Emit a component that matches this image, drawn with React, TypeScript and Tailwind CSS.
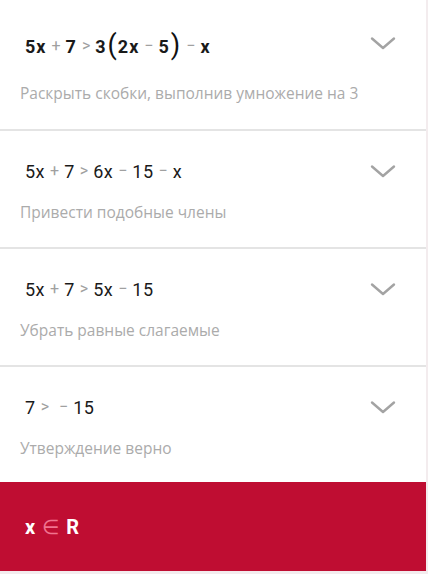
import React from 'react'

type Token = { t: string; op?: boolean; paren?: boolean }

interface Step {
  tokens: Token[]
  hint: string
  bold?: boolean
}

const n = (t: string): Token => ({ t })
const o = (t: string): Token => ({ t, op: true })
const p = (t: string): Token => ({ t, paren: true })

const steps: Step[] = [
  {
    bold: true,
    tokens: [n('5x'), o('+'), n('7'), o('>'), n('3'), p('('), n('2x'), o('−'), n('5'), p(')'), o('−'), n('x')],
    hint: 'Раскрыть скобки, выполнив умножение на 3'
  },
  {
    tokens: [n('5x'), o('+'), n('7'), o('>'), n('6x'), o('−'), n('15'), o('−'), n('x')],
    hint: 'Привести подобные члены'
  },
  {
    tokens: [n('5x'), o('+'), n('7'), o('>'), n('5x'), o('−'), n('15')],
    hint: 'Убрать равные слагаемые'
  },
  {
    tokens: [n('7'), o('>'), o('−'), n('15')],
    hint: 'Утверждение верно'
  }
]

function Chevron() {
  return (
    <svg width="26" height="15" viewBox="0 0 26 15" fill="none" className="shrink-0">
      <path d="M2 2.5 L13 12 L24 2.5" stroke="#a3a3a3" strokeWidth="2.4" strokeLinecap="round" strokeLinejoin="round" />
    </svg>
  )
}

function Expression({ tokens, bold }: { tokens: Token[]; bold?: boolean }) {
  return (
    <div className={`flex items-center ${bold ? 'h-8 font-bold' : 'h-7'} text-[18px] text-[#1a1a1a]`}>
      {tokens.map((tk, i) => {
        if (tk.op) {
          return (
            <span key={i} className="mx-[5px] text-[16px] font-normal text-[#a0a0a0]">
              {tk.t}
            </span>
          )
        }
        if (tk.paren) {
          return (
            <span key={i} className="mx-[1px] text-[27px] font-normal leading-none text-[#111] -translate-y-[1px]">
              {tk.t}
            </span>
          )
        }
        return (
          <span key={i} className={bold ? 'tracking-[1px]' : 'tracking-[0.5px]'}>
            {tk.t}
          </span>
        )
      })}
    </div>
  )
}

export default function App() {
  return (
    <div className="w-[428px] h-[574px] bg-[#f3ecee] font-['Roboto',sans-serif]">
      <div className="w-[426px] bg-white">
        {steps.map((step, i) => {
          const last = i === steps.length - 1
          const pad = step.bold ? 'pt-[30px] pb-[25px]' : last ? 'pt-[26px] pb-[23px]' : 'pt-[26px] pb-[24px]'
          return (
            <div key={i} className={`${last ? '' : 'border-b-2 border-[#e4e4e4]'} ${pad}`}>
              <div className="flex items-center justify-between pl-[25px] pr-[30px]">
                <Expression tokens={step.tokens} bold={step.bold} />
                <div className={step.bold ? '-translate-y-[3px]' : ''}>
                  <Chevron />
                </div>
              </div>
              <div
                className={`pl-[20px] h-[22px] leading-[22px] text-[15.5px] text-[#ababab] font-['Open_Sans',sans-serif] ${
                  step.bold ? 'mt-[20px]' : 'mt-[16px]'
                }`}
              >
                {step.hint}
              </div>
            </div>
          )
        })}
        <div className="h-[89px] bg-[#bf0d32] flex items-center pl-[25px] text-[20px] font-bold text-white">
          <span>x</span>
          <span className="mx-[7px] font-normal text-[#f0748f]">∈</span>
          <span>R</span>
        </div>
      </div>
    </div>
  )
}
